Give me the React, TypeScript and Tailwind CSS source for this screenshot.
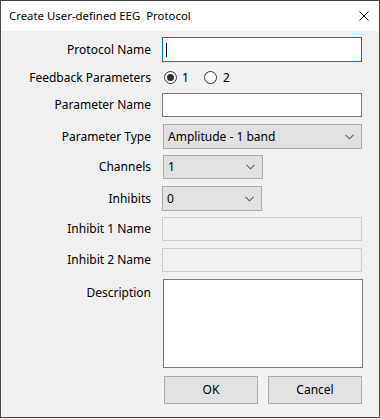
import React from "react";

const font = { fontFamily: '"Noto Sans", "Open Sans", sans-serif' };

function Chevron() {
  return (
    <svg width="9" height="6" viewBox="0 0 9 6" className="shrink-0">
      <path d="M0.5 0.8 L4.5 4.8 L8.5 0.8" fill="none" stroke="#606060" strokeWidth="1.1" />
    </svg>
  );
}

function Select({ value, width }: { value: string; width: string }) {
  return (
    <div
      className={`${width} h-full ml-px flex items-center justify-between pl-[4px] pr-[7px] bg-[#e1e1e1] border border-[#adadad]`}
    >
      <span className="text-[12px] text-black leading-none">{value}</span>
      <Chevron />
    </div>
  );
}

function Label({ children, top }: { children: React.ReactNode; top?: boolean }) {
  return (
    <div
      className={`w-[150px] shrink-0 flex justify-end text-[12px] text-black leading-none whitespace-nowrap ${
        top ? "items-start pt-[8px]" : "items-center"
      }`}
    >
      {children}
    </div>
  );
}

function Radio({ checked }: { checked?: boolean }) {
  return (
    <div className="w-[13px] h-[13px] rounded-full border border-[#333333] bg-white flex items-center justify-center">
      {checked && <div className="w-[7px] h-[7px] rounded-full bg-[#333333]" />}
    </div>
  );
}

export default function App() {
  return (
    <div className="w-[380px] h-[419px] bg-white" style={font}>
      <div className="w-[380px] h-[418px] border border-[#4a463c] flex flex-col bg-[#f0f0f0]">
        {/* Title bar */}
        <div className="h-[30px] bg-white flex items-center justify-between pl-[8px] pr-[10px] shrink-0">
          <span className="text-[11.4px] text-black whitespace-pre leading-none">Create User-defined EEG  Protocol</span>
          <svg width="10" height="10" viewBox="0 0 10 10">
            <path d="M0.5 0.5 L9.5 9.5 M9.5 0.5 L0.5 9.5" stroke="#000" strokeWidth="1" />
          </svg>
        </div>

        {/* Body */}
        <div className="flex flex-col">
          <div className="flex gap-[11px] h-[25px] mt-[6px]">
            <Label>Protocol Name</Label>
            <div className="w-[200px] h-full border border-[#0078d7] bg-white flex items-center pl-[3px]">
              <div className="w-px h-[14px] bg-black" />
            </div>
          </div>

          <div className="flex gap-[11px] h-[31px]">
            <Label>Feedback Parameters</Label>
            <div className="flex items-center ml-[2px]">
              <Radio checked />
              <span className="text-[12px] text-black ml-[5px] leading-none">1</span>
              <div className="ml-[15px]">
                <Radio />
              </div>
              <span className="text-[12px] text-black ml-[6px] leading-none">2</span>
            </div>
          </div>

          <div className="flex gap-[11px] h-[24px]">
            <Label>Parameter Name</Label>
            <div className="w-[200px] h-full border border-[#7a7a7a] bg-white" />
          </div>

          <div className="flex gap-[11px] h-[25px] mt-[7px]">
            <Label>Parameter Type</Label>
            <Select value="Amplitude - 1 band" width="w-[199px]" />
          </div>

          <div className="flex gap-[11px] h-[24px] mt-[6px]">
            <Label>Channels</Label>
            <Select value="1" width="w-[100px]" />
          </div>

          <div className="flex gap-[11px] h-[25px] mt-[7px]">
            <Label>Inhibits</Label>
            <div className="-ml-px h-full flex">
              <Select value="0" width="w-[100px]" />
            </div>
          </div>

          <div className="flex gap-[11px] h-[24px] mt-[6px]">
            <Label>Inhibit 1 Name</Label>
            <div className="w-[200px] h-full border border-[#cccccc] bg-[#f0f0f0]" />
          </div>

          <div className="flex gap-[11px] h-[24px] mt-[7px]">
            <Label>Inhibit 2 Name</Label>
            <div className="w-[200px] h-full border border-[#cccccc] bg-[#f0f0f0]" />
          </div>

          <div className="flex gap-[11px] h-[89px] mt-[7px]">
            <Label top>Description</Label>
            <div className="w-[200px] h-full ml-px border border-[#7a7a7a] bg-white" />
          </div>

          <div className="flex h-[28px] mt-[8px] pl-[163px] gap-[10px]">
            <button className="w-[94px] h-full bg-[#e1e1e1] border border-[#adadad] text-[12px] text-black leading-none">
              OK
            </button>
            <button className="w-[94px] h-full bg-[#e1e1e1] border border-[#adadad] text-[12px] text-black leading-none">
              Cancel
            </button>
          </div>
        </div>
      </div>
    </div>
  );
}
